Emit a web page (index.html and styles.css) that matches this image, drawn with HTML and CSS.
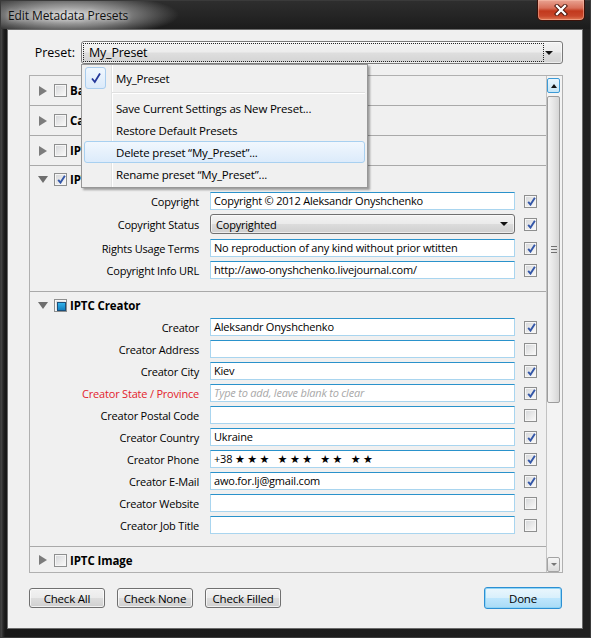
FILE: index.html
```html
<!DOCTYPE html>
<html>
<head>
<meta charset="utf-8">
<title>Edit Metadata Presets</title>
<link rel="stylesheet" href="styles.css">
</head>
<body>
<div class="window">
  <div class="titlebar">
    <span class="title">Edit Metadata Presets</span>
    <div class="close">
      <svg width="14" height="12" viewBox="0 0 14 12"><path d="M3 2 L11 10 M11 2 L3 10" stroke="#4a1208" stroke-width="4.2" stroke-linecap="square" fill="none"/><path d="M3 2 L11 10 M11 2 L3 10" stroke="#ffffff" stroke-width="2.3" stroke-linecap="square" fill="none"/></svg>
    </div>
  </div>
  <div class="client">
    <div class="preset-row">
      <span class="preset-label">Preset:</span>
      <div class="combo">
        <div class="combo-focus"><span>My_Preset</span></div>
        <span class="combo-arrow"></span>
      </div>
    </div>

    <div class="panel">
      <div class="panel-content">
        <div class="section">
          <div class="sec-head collapsed"><span class="tri"><span class="tri-right"></span></span><span class="cb"></span><span class="sec-title">Basic Info</span></div>
        </div>
        <div class="section">
          <div class="sec-head collapsed"><span class="tri"><span class="tri-right"></span></span><span class="cb"></span><span class="sec-title">Camera Info</span></div>
        </div>
        <div class="section">
          <div class="sec-head collapsed"><span class="tri"><span class="tri-right"></span></span><span class="cb"></span><span class="sec-title">IPTC Content</span></div>
        </div>
        <div class="section expanded">
          <div class="sec-head"><span class="tri"><span class="tri-down"></span></span><span class="cb checked"></span><span class="sec-title">IPTC Copyright</span></div>
          <div class="fields">
            <div class="frow"><span class="flabel">Copyright</span><div class="field">Copyright © 2012 Aleksandr Onyshchenko</div><span class="cb checked"></span></div>
            <div class="frow frow-select"><span class="flabel">Copyright Status</span><div class="select"><span>Copyrighted</span><span class="sel-arrow"></span></div><span class="cb checked"></span></div>
            <div class="frow"><span class="flabel">Rights Usage Terms</span><div class="field">No reproduction of any kind without prior wtitten</div><span class="cb checked"></span></div>
            <div class="frow"><span class="flabel">Copyright Info URL</span><div class="field">http://awo-onyshchenko.livejournal.com/</div><span class="cb checked"></span></div>
          </div>
        </div>
        <div class="section expanded">
          <div class="sec-head"><span class="tri"><span class="tri-down"></span></span><span class="cb mixed"></span><span class="sec-title">IPTC Creator</span></div>
          <div class="fields">
            <div class="frow"><span class="flabel">Creator</span><div class="field">Aleksandr Onyshchenko</div><span class="cb checked"></span></div>
            <div class="frow"><span class="flabel">Creator Address</span><div class="field"></div><span class="cb"></span></div>
            <div class="frow"><span class="flabel">Creator City</span><div class="field">Kiev</div><span class="cb checked"></span></div>
            <div class="frow"><span class="flabel red">Creator State / Province</span><div class="field placeholder">Type to add, leave blank to clear</div><span class="cb checked"></span></div>
            <div class="frow"><span class="flabel">Creator Postal Code</span><div class="field"></div><span class="cb"></span></div>
            <div class="frow"><span class="flabel">Creator Country</span><div class="field">Ukraine</div><span class="cb checked"></span></div>
            <div class="frow"><span class="flabel">Creator Phone</span><div class="field">+38 <span class="stars">★★★ ★★★ ★★ ★★</span></div><span class="cb checked"></span></div>
            <div class="frow"><span class="flabel">Creator E-Mail</span><div class="field">awo.for.lj@gmail.com</div><span class="cb checked"></span></div>
            <div class="frow"><span class="flabel">Creator Website</span><div class="field"></div><span class="cb"></span></div>
            <div class="frow"><span class="flabel">Creator Job Title</span><div class="field"></div><span class="cb"></span></div>
          </div>
        </div>
        <div class="section">
          <div class="sec-head"><span class="tri"><span class="tri-right"></span></span><span class="cb"></span><span class="sec-title">IPTC Image</span></div>
        </div>
      </div>
      <div class="vscroll">
        <div class="sb-btn sb-up"><span class="arr-up"></span></div>
        <div class="sb-thumb"><span class="grip"></span></div>
        <div class="sb-track"></div>
        <div class="sb-btn sb-down"><span class="arr-down"></span></div>
      </div>
    </div>

    <div class="buttons">
      <div class="btn">Check All</div>
      <div class="btn">Check None</div>
      <div class="btn">Check Filled</div>
      <div class="btn btn-default">Done</div>
    </div>

    <div class="menu">
      <div class="mitem"><span class="mcheck"><svg width="12" height="12" viewBox="0 0 12 12"><path d="M2 6.5 L4.8 10 L10 1.5" stroke="#24379a" stroke-width="1.8" fill="none"/></svg></span><span>My_Preset</span></div>
      <div class="msep"></div>
      <div class="mitem plain">Save Current Settings as New Preset...</div>
      <div class="mitem plain">Restore Default Presets</div>
      <div class="mitem plain hot">Delete preset “My_Preset”...</div>
      <div class="mitem plain">Rename preset “My_Preset”...</div>
    </div>
  </div>
</div>
</body>
</html>
```
FILE: styles.css
```css
* { box-sizing: border-box; }
html, body { margin: 0; padding: 0; }
body {
  width: 591px;
  height: 638px;
  overflow: hidden;
  background: #1a1a1a;
  font-family: "Open Sans", "Noto Sans", sans-serif;
  font-size: 11px;
  letter-spacing: -0.2px;
  color: #000;
}
.window {
  width: 591px;
  height: 638px;
  display: flex;
  flex-direction: column;
  background: linear-gradient(to right, #4a4a4a 0, #2a2a2a 2px, #181818 4px, #202020 100%);
  border: 1px solid #3a3a3a;
}

/* title bar */
.titlebar {
  height: 28px;
  flex: none;
  position: relative;
  display: flex;
  align-items: center;
  padding-left: 7px;
  background:
    radial-gradient(ellipse 110px 22px at 68px 14px, rgba(225,225,225,0.95) 0%, rgba(175,175,175,0.7) 50%, rgba(90,90,90,0) 100%),
    linear-gradient(#2e2e2e, #1c1c1c);
}
.title {
  font-size: 12px;
  letter-spacing: -0.1px;
  color: #101010;
  text-shadow: 0 0 5px rgba(255,255,255,0.8);
}
.close {
  position: absolute;
  top: -1px;
  right: 5px;
  width: 48px;
  height: 21px;
  border: 1px solid #3b1109;
  border-top: none;
  border-radius: 0 0 5px 5px;
  background: linear-gradient(#e9a392 0%, #d8705a 40%, #c2391d 55%, #c8462a 80%, #e07a55 100%);
  box-shadow: inset 0 0 0 1px rgba(255,200,180,0.45);
  display: flex;
  align-items: center;
  justify-content: center;
}

/* client */
.client {
  flex: 1;
  margin: 0 7px 8px 6px;
  border: 1px solid #6b6b6b;
  background: #f0f0f0;
  position: relative;
  display: flex;
  flex-direction: column;
  padding: 11px 19px 0 21px;
}
.preset-row {
  display: flex;
  align-items: center;
  height: 23px;
  flex: none;
}
.preset-label {
  width: 46px;
  text-align: right;
  margin-right: 6px;
  font-size: 12.5px;
  letter-spacing: 0;
}
.combo {
  flex: 1;
  height: 23px;
  border: 1px solid #7a7a7a;
  border-radius: 3px;
  background: linear-gradient(#f3f3f3 0%, #ececec 48%, #dedede 52%, #d3d3d3 100%);
  box-shadow: inset 0 0 0 1px rgba(255,255,255,0.6);
  display: flex;
  align-items: center;
  padding: 1px;
}
.combo-focus {
  height: 19px;
  flex: 1;
  margin-right: 17px;
  border: 1px dotted #222;
  display: flex;
  align-items: center;
  padding-left: 5px;
  font-size: 12.5px;
  letter-spacing: -0.2px;
}
.combo-arrow, .sel-arrow {
  width: 0;
  height: 0;
  border-left: 4px solid transparent;
  border-right: 4px solid transparent;
  border-top: 4px solid #111;
}
.combo-arrow {
  position: absolute;
  right: 29px;
  top: 21px;
}

/* panel */
.panel {
  margin-top: 11px;
  height: 498px;
  flex: none;
  border: 1px solid #b0b0b0;
  background: #f0f0f0;
  display: flex;
  overflow: hidden;
}
.panel-content {
  flex: 1;
  overflow: hidden;
}
.section {
  border-bottom: 1px solid #a9a9a9;
}
.sec-head {
  height: 26px;
  display: flex;
  align-items: center;
}
.sec-head.collapsed { height: 29px; }
.tri {
  width: 10px;
  margin-left: 8px;
  margin-right: 6px;
  display: flex;
  justify-content: center;
  align-items: center;
}
.tri-right {
  width: 0; height: 0;
  border-top: 5px solid transparent;
  border-bottom: 5px solid transparent;
  border-left: 8px solid #7c7c7c;
}
.tri-down {
  width: 0; height: 0;
  border-left: 5px solid transparent;
  border-right: 5px solid transparent;
  border-top: 7px solid #6e6e6e;
}
.sec-title {
  margin-left: 3px;
  font-weight: bold;
  font-size: 11.5px;
  letter-spacing: -0.1px;
}

/* checkbox */
.cb {
  width: 13px;
  height: 13px;
  flex: none;
  border: 1px solid #8e8f8f;
  background: linear-gradient(135deg, #d4d6d9 0%, #ececec 60%, #fbfbfb 100%);
  box-shadow: inset 0 0 0 1px #f6f6f6;
  position: relative;
}
.cb.checked::after {
  content: "";
  position: absolute;
  left: 2px;
  top: 1px;
  width: 9px;
  height: 9px;
  background: url("data:image/svg+xml;utf8,<svg xmlns='http://www.w3.org/2000/svg' width='9' height='9' viewBox='0 0 9 9'><path d='M1.2 4.8 L3.5 7.6 L7.9 0.8' stroke='%233457a8' stroke-width='1.9' fill='none'/></svg>") no-repeat;
}
.cb.mixed::after {
  content: "";
  position: absolute;
  left: 2px;
  top: 2px;
  width: 7px;
  height: 7px;
  background: linear-gradient(#33b2ea, #1380c0);
  border: 1px solid #1c4f7a;
}

/* fields */
.fields {
  display: flex;
  flex-direction: column;
  gap: 4px;
  padding-bottom: 12px;
}
.frow {
  display: flex;
  align-items: center;
  height: 18px;
}
.frow-select { height: 20px; margin-bottom: 1px; }
.flabel {
  width: 169px;
  margin-right: 11px;
  text-align: right;
  white-space: nowrap;
}
.flabel.red { color: #e3222b; }
.field {
  width: 305px;
  height: 18px;
  background: #fff;
  border: 1px solid #a9d5ef;
  border-top-color: #2a92cb;
  padding-left: 3px;
  line-height: 16px;
  white-space: nowrap;
  overflow: hidden;
}
.field.placeholder {
  color: #a8a8a8;
  font-style: italic;
}
.stars {
  font-family: "DejaVu Sans", sans-serif;
  font-size: 11px;
  letter-spacing: 2.4px;
}
.frow .cb { margin-left: 9px; }
.select {
  width: 305px;
  height: 20px;
  border: 1px solid #707070;
  border-radius: 3px;
  background: linear-gradient(#f3f3f3 0%, #ebebeb 48%, #dcdcdc 52%, #cfcfcf 100%);
  box-shadow: inset 0 0 0 1px rgba(255,255,255,0.6);
  display: flex;
  align-items: center;
  justify-content: space-between;
  padding: 0 6px 0 5px;
}

/* scrollbar */
.vscroll {
  width: 16px;
  flex: none;
  border-left: 1px solid #c2c2c2;
  display: flex;
  flex-direction: column;
  padding-top: 2px;
  background: #f3f3f3;
}
.sb-btn {
  width: 13px;
  height: 15px;
  flex: none;
  border-radius: 2px;
  display: flex;
  align-items: center;
  justify-content: center;
}
.sb-up {
  border: 1px solid #3c9ad6;
  background: linear-gradient(#eaf6fd, #c6e6f7);
}
.sb-down {
  border: 1px solid #a3a3a3;
  background: linear-gradient(#f6f6f6, #dcdcdc);
}
.arr-up {
  width: 0; height: 0;
  border-left: 3px solid transparent;
  border-right: 3px solid transparent;
  border-bottom: 4px solid #111;
}
.arr-down {
  width: 0; height: 0;
  border-left: 3px solid transparent;
  border-right: 3px solid transparent;
  border-top: 3px solid #777;
}
.sb-thumb {
  width: 13px;
  height: 307px;
  margin-top: 3px;
  flex: none;
  border: 1px solid #9c9c9c;
  border-radius: 2px;
  background: linear-gradient(to right, #f4f4f4 0%, #e6e6e6 50%, #d6d6d6 100%);
  display: flex;
  align-items: center;
  justify-content: center;
}
.grip {
  width: 6px;
  height: 7px;
  background: repeating-linear-gradient(#707070 0 1px, transparent 1px 3px);
}
.sb-track { flex: 1; }

/* buttons */
.buttons {
  margin-top: 14px;
  height: 22px;
  display: flex;
  align-items: center;
  gap: 12px;
}
.btn {
  width: 76px;
  height: 20px;
  border: 1px solid #707070;
  border-radius: 3px;
  background: linear-gradient(#f2f2f2 0%, #ebebeb 48%, #dddddd 52%, #cfcfcf 100%);
  box-shadow: inset 0 0 0 1px rgba(255,255,255,0.7);
  display: flex;
  align-items: center;
  justify-content: center;
  font-size: 11.5px;
}
.btn-default {
  margin-left: auto;
  width: 78px;
  height: 22px;
  border: 1px solid #2c8fd3;
  background: linear-gradient(#eaf6fd 0%, #d9f0fc 48%, #bee6fd 52%, #a9dbf6 100%);
  box-shadow: inset 0 0 0 1px #8fd4f5;
  margin-right: 1px;
}

/* menu */
.menu {
  position: absolute;
  left: 73px;
  top: 34px;
  width: 287px;
  height: 124px;
  border: 1px solid #979797;
  background:
    linear-gradient(to right, transparent 29px, #e2e3e3 29px, #e2e3e3 30px, #ffffff 30px, #ffffff 31px, transparent 31px),
    #f0f0f0;
  box-shadow: 2px 2px 2px rgba(0,0,0,0.35);
  padding-top: 2px;
  font-size: 11.5px;
  letter-spacing: -0.2px;
}
.mitem {
  height: 22px;
  margin: 0 2px;
  border: 1px solid transparent;
  border-radius: 3px;
  display: flex;
  align-items: center;
  white-space: nowrap;
}
.mitem.plain { padding-left: 31px; }
.mitem.hot {
  border-color: #a8d0f0;
  background: linear-gradient(#f1f7fd, #dcebfb);
}
.mcheck {
  width: 21px;
  height: 22px;
  margin-top: 1px;
  margin-bottom: 1px;
  margin-right: 10px;
  border: 1px solid #a9cdee;
  border-radius: 3px;
  background: linear-gradient(#f0f7fe, #dbeafa);
  display: flex;
  align-items: center;
  justify-content: center;
}
.msep {
  height: 8px;
  margin-left: 30px;
  margin-right: 2px;
  background: linear-gradient(transparent 3px, #e0e0e0 3px, #e0e0e0 4px, #ffffff 4px, #ffffff 5px, transparent 5px);
}
```
